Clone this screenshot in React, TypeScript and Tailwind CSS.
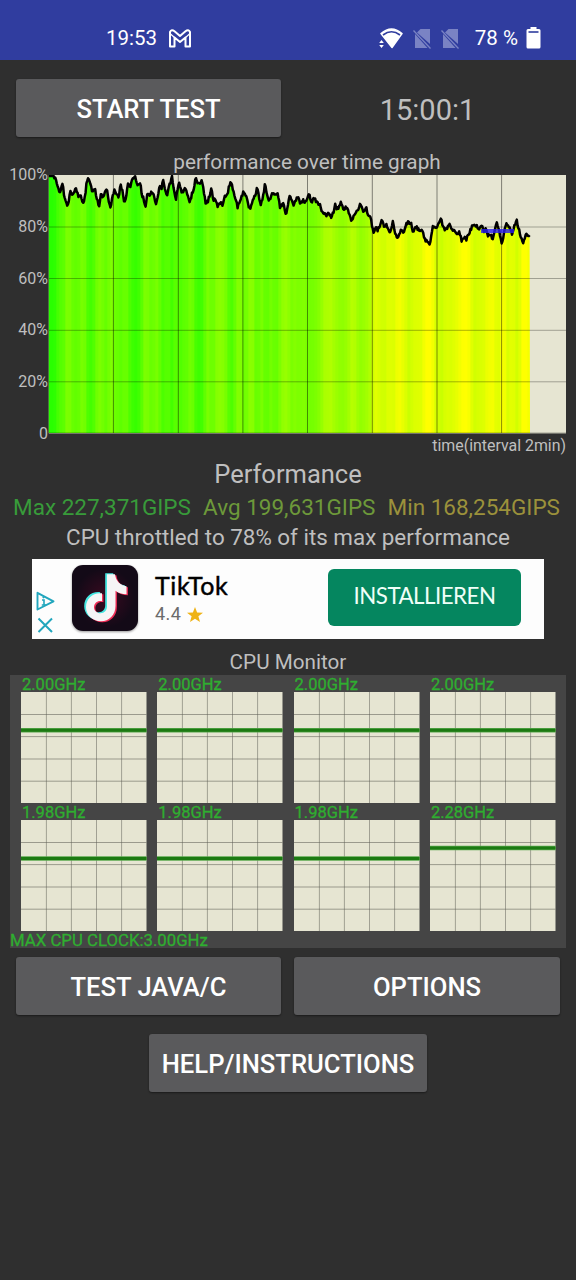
import React from "react";

type Pt = [number, number];

const segA: Pt[] = [[146,78],[162,78],[170,95],[176,122],[180,130],[184,112],[188,100],[191,128],[197,150],[201,170],[207,150],[212,118],[216,138],[222,125],[228,118],[234,136],[242,140],[248,158],[256,140],[259,105],[264,84],[270,98],[276,122],[281,120],[285,108],[288,140],[293,155],[297,174],[303,125],[310,145],[316,120],[320,115],[325,150],[333,173],[338,135],[344,118],[350,138],[356,138],[362,104],[368,125],[373,165],[380,128],[384,98],[390,110],[398,88],[404,78],[410,98],[416,108],[421,98],[425,138],[430,140],[436,170],[442,132],[448,138],[455,128],[461,132],[468,160],[474,140],[478,112],[484,115],[490,92],[495,120],[502,135],[508,105],[516,82],[522,125],[528,145],[537,92],[543,120],[549,130],[557,112],[563,135],[569,158]];
const segB: Pt[] = [[3,125],[10,110],[17,80],[22,98],[27,92],[30,105],[36,90],[40,118],[44,135],[47,162],[54,152],[59,135],[64,117],[70,148],[77,152],[84,170],[90,158],[98,165],[105,140],[112,132],[121,95],[128,115],[135,140],[143,172],[152,148],[160,128],[168,138],[180,180],[188,148],[194,140],[201,115],[206,135],[213,165],[219,138],[225,103],[232,140],[240,152],[246,130],[258,130],[263,130],[270,172],[279,158],[289,195],[296,150],[299,135],[304,148],[311,165],[318,152],[324,140],[331,162],[338,152],[347,155],[356,132],[365,155],[372,140],[378,155],[390,162],[395,180],[401,192],[409,195],[416,188],[424,205],[432,180],[435,162],[440,182],[445,172],[452,157],[460,175],[470,172],[478,192],[484,213],[492,195],[498,185],[504,178],[511,160],[518,178],[523,190],[528,172],[535,195],[541,195],[546,228],[551,250],[557,228],[563,240],[570,225],[576,212],[582,232],[588,225],[594,232],[598,250]];
const segC: Pt[] = [[45,240],[51,215],[58,250],[64,268],[70,250],[76,240],[82,248],[88,228],[96,215],[104,218],[111,242],[120,230],[130,240],[138,235],[143,260],[148,275],[155,270],[161,282],[167,255],[171,228],[178,235],[187,222],[195,210],[201,225],[208,240],[222,225],[229,240],[236,238],[243,250],[250,245],[257,272],[264,262],[270,270],[278,252],[286,235],[294,218],[303,228],[310,240],[318,225],[324,245],[331,235],[336,262],[342,250],[350,268],[356,240],[362,218],[368,235],[373,260],[378,282],[384,250],[390,222],[398,230],[404,245],[410,252],[415,225],[422,212],[428,235],[434,258],[441,278],[447,260],[454,250],[459,265],[463,252]];

const X0 = 48;
const Y0 = 175;
const toChart = (seg: Pt[], ox: number): Pt[] => seg.map(([x, y]) => [ox + x / 3 - X0, 150 + y / 3 - Y0]);
const pts: Pt[] = [
  ...toChart(segA, 0),
  ...toChart([[577,128],[584,105]], 0),
  ...toChart(segB, 190).filter(([x]) => x > 147.5),
  ...toChart(segC, 376),
];
pts.sort((a, b) => a[0] - b[0]);

function at(x: number): number {
  if (x <= pts[0][0]) return pts[0][1];
  for (let i = 1; i < pts.length; i++) {
    if (x <= pts[i][0]) {
      const [ax, ay] = pts[i - 1];
      const [bx, by] = pts[i];
      return bx === ax ? by : ay + ((by - ay) * (x - ax)) / (bx - ax);
    }
  }
  return pts[pts.length - 1][1];
}

const END = 482;
const line: string[] = [];
for (let x = 0.8; x <= END; x += 0.8) {
  const n = Math.sin(x * 12.9898) * 43758.5453;
  const jitter = (n - Math.floor(n) - 0.5) * 3.4;
  line.push(`${x.toFixed(1)},${Math.max(1, at(x) + (x > 5 ? jitter : 0)).toFixed(1)}`);
}
const area = `0.8,258 ${line.join(" ")} ${END},258`;

const stops: { o: number; c: string }[] = [];
for (let x = 0; x <= END; x += 3) {
  const avg = (at(x - 2) + at(x) + at(x + 2)) / 3;
  const r = Math.max(20, Math.min(255, Math.round(38 + (avg / 2.583) * 8.9)));
  const c = `rgb(${r},255,0)`;
  stops.push({ o: x / END, c });
  stops.push({ o: Math.min(1, (x + 1.6) / END), c });
}

function PerfChart() {
  return (
    <svg width="518" height="259" viewBox="0 0 518 259" className="block shrink-0">
      <defs>
        <linearGradient id="heat" gradientUnits="userSpaceOnUse" x1="0" x2={END} y1="0" y2="0">
          {stops.map((s, i) => (
            <stop key={i} offset={s.o} stopColor={s.c} />
          ))}
        </linearGradient>
      </defs>
      <rect x="0.8" y="0" width="517.2" height="258.5" fill="#e6e5d2" />
      <polygon points={area} fill="url(#heat)" />
      {[65.4, 130.3, 194.9, 259.5, 324.3, 389, 453.6].map((x) => (
        <line key={x} x1={x} x2={x} y1="0" y2="258" stroke="#000" strokeOpacity=".45" strokeWidth="1" />
      ))}
      {[52, 103.5, 155.3, 206.8, 258].map((y) => (
        <line key={y} x1="1" x2="518" y1={y} y2={y} stroke="#000" strokeOpacity=".3" strokeWidth="1" />
      ))}
      <polyline points={line.join(" ")} fill="none" stroke="#000" strokeWidth="2.5" strokeLinejoin="round" />
      <line x1="433" x2="466" y1="56" y2="56" stroke="#2b20f0" strokeOpacity=".8" strokeWidth="3.8" />
    </svg>
  );
}

function CpuChart({ label, y }: { label: string; y: number }) {
  return (
    <div className="w-[126px]">
      <div className="h-[17px] pl-px text-[16.5px] leading-[19px] whitespace-nowrap text-[#2fae30] [-webkit-text-stroke:0.3px_#2fae30]">{label}</div>
      <svg width="126" height="111" viewBox="0 0 126 111" className="block">
        <rect width="125.5" height="111" fill="#e6e5d2" />
        {[25.4, 50.4, 75.5, 100.6].map((x) => (
          <line key={x} x1={x} x2={x} y1="0" y2="111" stroke="#5c5c54" strokeOpacity=".5" />
        ))}
        {[22.5, 44.6, 67, 89.2].map((v) => (
          <line key={v} x1="0" x2="125.5" y1={v} y2={v} stroke="#5c5c54" strokeOpacity=".55" />
        ))}
        <line x1="0" x2="125.5" y1={y} y2={y} stroke="#58a84c" strokeWidth="4.4" />
        <line x1="0" x2="125.5" y1={y} y2={y} stroke="#1c7a12" strokeWidth="2.9" />
      </svg>
    </div>
  );
}

function Btn({ w, children }: { w: string; children: React.ReactNode }) {
  return (
    <button className={`${w} flex h-[58px] items-center justify-center rounded-[3px] bg-[#5a5a5c] pt-[2px] text-[25.6px] font-medium text-white shadow-[0_1px_2px_rgba(0,0,0,0.45)]`}>
      {children}
    </button>
  );
}

function NoSim() {
  return (
    <svg width="19" height="21" viewBox="0 0 19 21" className="block">
      <path d="M4 4.500L7.500 1H17V16Z" fill="#7a83c4" />
      <path d="M2 6V20H14.500Z" fill="#7a83c4" />
      <path d="M0.500 2.500L17.500 20.500" stroke="#7a83c4" strokeWidth="1.300" />
    </svg>
  );
}

export default function App() {
  return (
    <div className="h-[1280px] w-[576px] overflow-hidden bg-[#2f2f2f] text-[#bfbfbf] [font-family:Roboto,'Liberation_Sans',sans-serif]">
      <header className="flex h-[60px] bg-[#303d9f] pt-[26px] pr-[35px] pl-[106px] text-[20.5px] leading-[25px] text-white">
        <span>19:53</span>
        <svg width="24" height="21" viewBox="0 0 24 21" className="mt-[2px] ml-[11px] block">
          <path d="M2 4Q3.500 1 6.500 3.300L12 8L17.500 3.300Q20.500 1 22 4V18.500H17.500V9.500L12 14L6.500 9.500V18.500H2Z" fill="none" stroke="#fff" strokeWidth="2" strokeLinejoin="round" />
          <path d="M2.500 6L6.500 9.500M21.500 6L17.500 9.500" fill="none" stroke="#fff" strokeWidth="1.200" />
        </svg>
        <div className="ml-auto flex">
          <svg width="26" height="22" viewBox="0 0 26 22" className="mt-px block">
            <path d="M3 6.500Q13.500-2.500 24 6.500L14 20.500Z" fill="#fff" stroke="#fff" strokeWidth="1.500" strokeLinejoin="round" />
            <path d="M5 8Q13.500 1.500 22 8" fill="none" stroke="#303d9f" strokeWidth="1.600" />
            <path d="M0 12.500H6L10 22H0Z" fill="#303d9f" />
            <path d="M1.200 16L3.500 13L5.800 16ZM1.200 18L3.500 21L5.800 18Z" fill="#fff" />
          </svg>
          <div className="mt-[2px] ml-[9px]"><NoSim /></div>
          <div className="mt-[2px] ml-[9px]"><NoSim /></div>
          <span className="ml-[15px] whitespace-nowrap">78 %</span>
          <svg width="15" height="23" viewBox="0 0 15 23" className="ml-[8px] block">
            <path d="M4.500 1H10.500V3H13Q14.500 3 14.500 4.500V21Q14.500 22.500 13 22.500H2Q.5 22.500 .5 21V4.500Q.5 3 2 3H4.500Z" fill="#fff" />
            <rect x="2.500" y="5.200" width="10" height="1.600" fill="#303d9f" />
          </svg>
        </div>
      </header>

      <main>
        <div className="flex h-[77px] pt-[19px] pl-4">
          <Btn w="w-[265px]">START TEST</Btn>
          <div className="flex-1 pt-[3px] pr-[2px] text-center text-[29px] leading-[56px]">15:00:1</div>
        </div>

        <div className="h-[38px] pt-[13px] pl-[38px] text-center text-[20.75px] leading-[24px]">performance over time graph</div>
        <div className="flex h-[259px]">
          <div className="-mt-[8px] flex h-[275px] w-12 shrink-0 flex-col justify-between text-right text-[16px] leading-[16px]">
            <span>100%</span><span>80%</span><span>60%</span><span>40%</span><span>20%</span><span>0</span>
          </div>
          <PerfChart />
        </div>
        <div className="pt-px pr-[10px] text-right text-[15.9px] leading-[22px]">time(interval 2min)</div>
        <div className="mt-[2px] text-center text-[25.5px] leading-[31px]">Performance</div>
        <div className="flex h-[34px] justify-between pt-px pr-[16px] pl-[13px] text-[22.5px] leading-[32px] whitespace-nowrap">
          <span className="text-[#389b3a]">Max 227,371GIPS</span>
          <span className="text-[#6d993a]">Avg 199,631GIPS</span>
          <span className="text-[#9b913b]">Min 168,254GIPS</span>
        </div>
        <div className="h-[35px] text-center text-[22.4px] leading-[26px]">CPU throttled to 78% of its max performance</div>

        <div className="mx-8 flex h-[80px] bg-[#fdfdfd]">
          <div className="flex w-[40px] flex-col pt-[32px] pl-[4px]">
            <svg width="20" height="20" viewBox="0 0 20 20" className="block">
              <path d="M1.500 1.800L17.500 10.300L1.500 18.500Z" fill="none" stroke="#21a6bd" strokeWidth="1.900" strokeLinejoin="round" />
              <path d="M6 9H8V14M5.800 14H10" fill="none" stroke="#21a6bd" strokeWidth="1.600" />
              <circle cx="7.500" cy="6.300" r="1.100" fill="#21a6bd" />
            </svg>
            <svg width="18" height="18" viewBox="0 0 18 18" className="mt-[5px] block">
              <path d="M2.500 2.500L16 16M16 2.500L2.500 16" stroke="#21a6bd" strokeWidth="2" />
            </svg>
          </div>
          <svg width="66" height="66" viewBox="0 0 66 66" className="mt-[6px] block drop-shadow-[0_1px_1px_rgba(0,0,0,0.4)]">
            <defs>
              <radialGradient id="tile"><stop offset="0" stopColor="#3a0a20" /><stop offset=".9" stopColor="#130a17" /></radialGradient>
              <path id="note" d="M34 9H42C43 16 47 20 53.500 21V29C49 29 45 27.500 42.500 25.500V40.500C42.500 50 36 56 28 56C19 56 13 49.500 13 42C13 33 20 27 29 28V36C24.500 35 21 38 21 42C21 45.500 24 48 27.500 48C31.500 48 34 45 34 41Z" />
            </defs>
            <rect width="66" height="66" rx="11" fill="url(#tile)" />
            <use href="#note" x="-.8" y="-.8" fill="#45e5e0" />
            <use href="#note" x="2.400" y="1.300" fill="#ef2d56" />
            <use href="#note" x="1" y=".3" fill="#f5f5f5" />
          </svg>
          <div className="ml-[17px] pt-[11px] [font-family:Lato,Roboto,sans-serif]">
            <div className="text-[25px] leading-[31px] tracking-[0.6px] text-black [-webkit-text-stroke:0.45px_black]">TikTok</div>
            <div className="flex items-center text-[18px] leading-[26px] text-[#6b6b6b] [font-family:Roboto,sans-serif]">
              <span className="tracking-[0.4px]">4.4</span>
              <svg width="16" height="15" viewBox="0 0 16 15" className="ml-[6px] block"><path d="M8 0L10.100 5.400L16 5.700L11.400 9.300L13 15L8 11.700L3 15L4.600 9.300L0 5.700L5.900 5.400Z" fill="#efb316" /></svg>
            </div>
          </div>
          <button className="mt-[10px] mr-[23px] ml-auto h-[57px] w-[193px] rounded-[6px] bg-[#05865f] pb-[4px] text-[22.3px] tracking-[-0.5px] text-[#effff8] [font-family:Lato,Roboto,sans-serif]">INSTALLIEREN</button>
        </div>

        <div className="h-[36px] pt-[11px] text-center text-[20.7px] leading-[25px]">CPU Monitor</div>
        <section className="ml-[10px] h-[273px] w-[556px] bg-[#454545]">
          <div className="flex flex-wrap gap-x-[10.300px] pl-[11px]">
            <CpuChart label="2.00GHz" y={38.2} />
            <CpuChart label="2.00GHz" y={38.2} />
            <CpuChart label="2.00GHz" y={38.2} />
            <CpuChart label="2.00GHz" y={38.2} />
            <CpuChart label="1.98GHz" y={38.5} />
            <CpuChart label="1.98GHz" y={38.5} />
            <CpuChart label="1.98GHz" y={38.5} />
            <CpuChart label="2.28GHz" y={28} />
          </div>
          <div className="pt-px text-[16.8px] leading-[17px] text-[#2fae30] [-webkit-text-stroke:0.3px_#2fae30]">MAX CPU CLOCK:3.00GHz</div>
        </section>

        <div className="flex gap-[13px] pt-[9px] pl-4">
          <Btn w="w-[265px]">TEST JAVA/C</Btn>
          <Btn w="w-[266px]">OPTIONS</Btn>
        </div>
        <div className="flex justify-center pt-[19px]">
          <Btn w="w-[278px]">HELP/INSTRUCTIONS</Btn>
        </div>
      </main>
    </div>
  );
}
